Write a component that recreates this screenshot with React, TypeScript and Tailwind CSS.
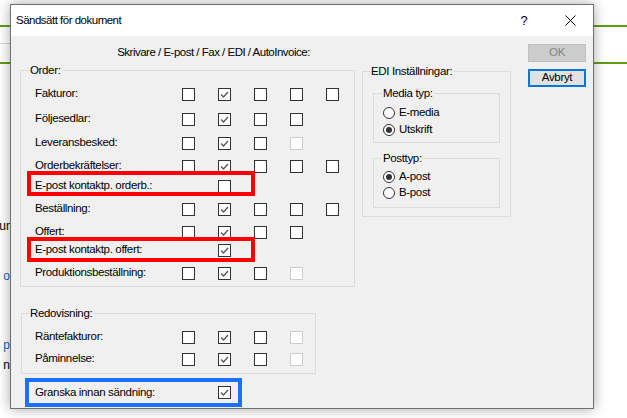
import React from 'react'

type Cell = 0 | 1 | 'd' | null

function Box({ v }: { v: Cell }) {
  if (v === null) return <span className="w-[13px] h-[13px]" />
  if (v === 'd') return <span className="w-[13px] h-[13px] border border-[#cccccc] bg-white" />
  return (
    <span className="w-[13px] h-[13px] border border-[#333333] bg-white flex items-center justify-center">
      {v === 1 && (
        <svg width="11" height="11" viewBox="0 0 11 11">
          <polyline points="2,5.5 4.5,8 9,3" fill="none" stroke="#555555" strokeWidth="1.3" />
        </svg>
      )}
    </span>
  )
}

function Row({ label, cells, mt, red }: { label: string; cells: Cell[]; mt: string; red?: string }) {
  return (
    <div className={`relative flex items-center h-[16px] ${mt}`}>
      <span className="w-[147px] shrink-0">{label}</span>
      <div className="flex gap-[23px]">
        {cells.map((c, i) => <Box key={i} v={c} />)}
      </div>
      {red && <div className={`absolute left-[-8px] w-[228px] h-[25px] border-4 border-[#ff0000] ${red}`} />}
    </div>
  )
}

function Radio({ label, on }: { label: string; on?: boolean }) {
  return (
    <div className="flex items-center gap-[4px]">
      <span className="w-[12px] h-[12px] rounded-full border border-[#333333] bg-white flex items-center justify-center">
        {on && <span className="w-[6px] h-[6px] rounded-full bg-[#333333]" />}
      </span>
      <span>{label}</span>
    </div>
  )
}

export default function App() {
  return (
    <div className="relative w-[627px] h-[418px] overflow-hidden bg-white font-['Liberation_Sans',Arial,sans-serif] text-[11.5px] tracking-[-0.35px] text-black">
      {/* page behind the dialog */}
      <div className="flex flex-col">
        <div className="mt-[25px] h-[2px] bg-[#5f9e12]" />
        <div className="mt-[16px] h-[1px] w-[10px] bg-[#d6d6d6]" />
        <div className="mt-[18px] h-[2px] bg-[#5f9e12]" />
        <div className="w-[16px] flex flex-col items-end text-[12px] leading-[14px] tracking-normal">
          <span className="mt-[155px]">um</span>
          <span className="mt-[36px] text-[#1a5fc0] pr-[6px]">o</span>
          <span className="mt-[55px] text-[#1a5fc0] pr-[6px]">p</span>
          <span className="mt-[6px]">ns</span>
        </div>
      </div>

      {/* dialog */}
      <div className="absolute left-[10px] top-[4px] w-[584px] h-[405px] border border-[#707070] bg-[#f0f0f0] shadow-[0_0_12px_rgba(0,0,0,0.35)] flex flex-col">
        <div className="h-[31px] bg-white flex items-center shrink-0">
          <span className="pl-[5px] tracking-[-0.5px]">Sändsätt för dokument</span>
          <span className="ml-auto w-[46px] text-center text-[13px]">?</span>
          <span className="w-[46px] flex justify-center">
            <svg width="11" height="11" viewBox="0 0 11 11">
              <path d="M0.5 0.5 L10.5 10.5 M10.5 0.5 L0.5 10.5" stroke="#000" strokeWidth="1" />
            </svg>
          </span>
        </div>

        <div className="flex pl-[9px] pr-[7px]">
          <div className="flex flex-col w-[491px]">
            <div className="mt-[8px] leading-[16px] w-[387px] text-center tracking-[-0.5px]">Skrivare / E-post / Fax / EDI / AutoInvoice:</div>

            <div className="flex items-start mt-[3px]">
              <fieldset className="w-[335px] border border-[#dcdcdc]">
                <legend className="ml-[8px] px-[1px] leading-[14px]">Order:</legend>
                <div className="pl-[14px] pb-[5px]">
                  <Row label="Fakturor:" cells={[0, 1, 0, 0, 0]} mt="mt-[9px]" />
                  <Row label="Följesedlar:" cells={[0, 1, 0, 0]} mt="mt-[9px]" />
                  <Row label="Leveransbesked:" cells={[0, 1, 0, 'd']} mt="mt-[8px]" />
                  <Row label="Orderbekräftelser:" cells={[0, 1, 0, 0, 0]} mt="mt-[7px]" />
                  <Row label="E-post kontaktp. orderb.:" cells={[null, 0]} mt="mt-[4px]" red="top-[-7px]" />
                  <Row label="Beställning:" cells={[0, 1, 0, 0, 0]} mt="mt-[7px]" />
                  <Row label="Offert:" cells={[0, 1, 0, 0]} mt="mt-[7px]" />
                  <Row label="E-post kontaktp. offert:" cells={[null, 1]} mt="mt-[2px]" red="top-[-5px]" />
                  <Row label="Produktionsbeställning:" cells={[0, 1, 0, 'd']} mt="mt-[7px]" />
                </div>
              </fieldset>

              <fieldset className="ml-[7px] mt-[1px] w-[149px] border border-[#dcdcdc]">
                <legend className="ml-[7px] px-[1px] leading-[14px]">EDI Inställningar:</legend>
                <div className="px-[10px] pb-[8px]">
                  <fieldset className="mt-[8px] border border-[#dcdcdc]">
                    <legend className="ml-[8px] px-[1px] leading-[14px]">Media typ:</legend>
                    <div className="flex flex-col mt-[4px] pl-[9px] pb-[4px]">
                      <div className="h-[17px] flex items-center"><Radio label="E-media" /></div>
                      <div className="h-[17px] flex items-center"><Radio label="Utskrift" on /></div>
                    </div>
                  </fieldset>
                  <fieldset className="mt-[8px] border border-[#dcdcdc]">
                    <legend className="ml-[8px] px-[1px] leading-[14px]">Posttyp:</legend>
                    <div className="flex flex-col mt-[4px] pl-[9px] pb-[6px]">
                      <div className="h-[16px] flex items-center"><Radio label="A-post" on /></div>
                      <div className="h-[16px] flex items-center"><Radio label="B-post" /></div>
                    </div>
                  </fieldset>
                </div>
              </fieldset>
            </div>

            <fieldset className="ml-[1px] mt-[19px] w-[295px] border border-[#dcdcdc]">
              <legend className="ml-[7px] px-[1px] leading-[14px]">Redovisning:</legend>
              <div className="pl-[13px] pb-[6px]">
                <Row label="Räntefakturor:" cells={[0, 1, 0, 'd']} mt="mt-[9px]" />
                <Row label="Påminnelse:" cells={[0, 1, 0, 'd']} mt="mt-[6px]" />
              </div>
            </fieldset>

            <div className="ml-[5px] mt-[4px] w-[217px] h-[29px] border-4 border-[#1a70ff] flex items-center pl-[6px]">
              <span className="w-[183px] shrink-0">Granska innan sändning:</span>
              <Box v={1} />
            </div>
          </div>

          <div className="ml-auto flex flex-col gap-[7px] mt-[8px]">
            <div className="w-[58px] h-[18px] bg-[#cccccc] border border-[#bfbfbf] text-[#838383] flex items-center justify-center">OK</div>
            <div className="w-[58px] h-[18px] bg-[#e1e1e1] border-2 border-[#0078d7] flex items-center justify-center">Avbryt</div>
          </div>
        </div>
      </div>
    </div>
  )
}
